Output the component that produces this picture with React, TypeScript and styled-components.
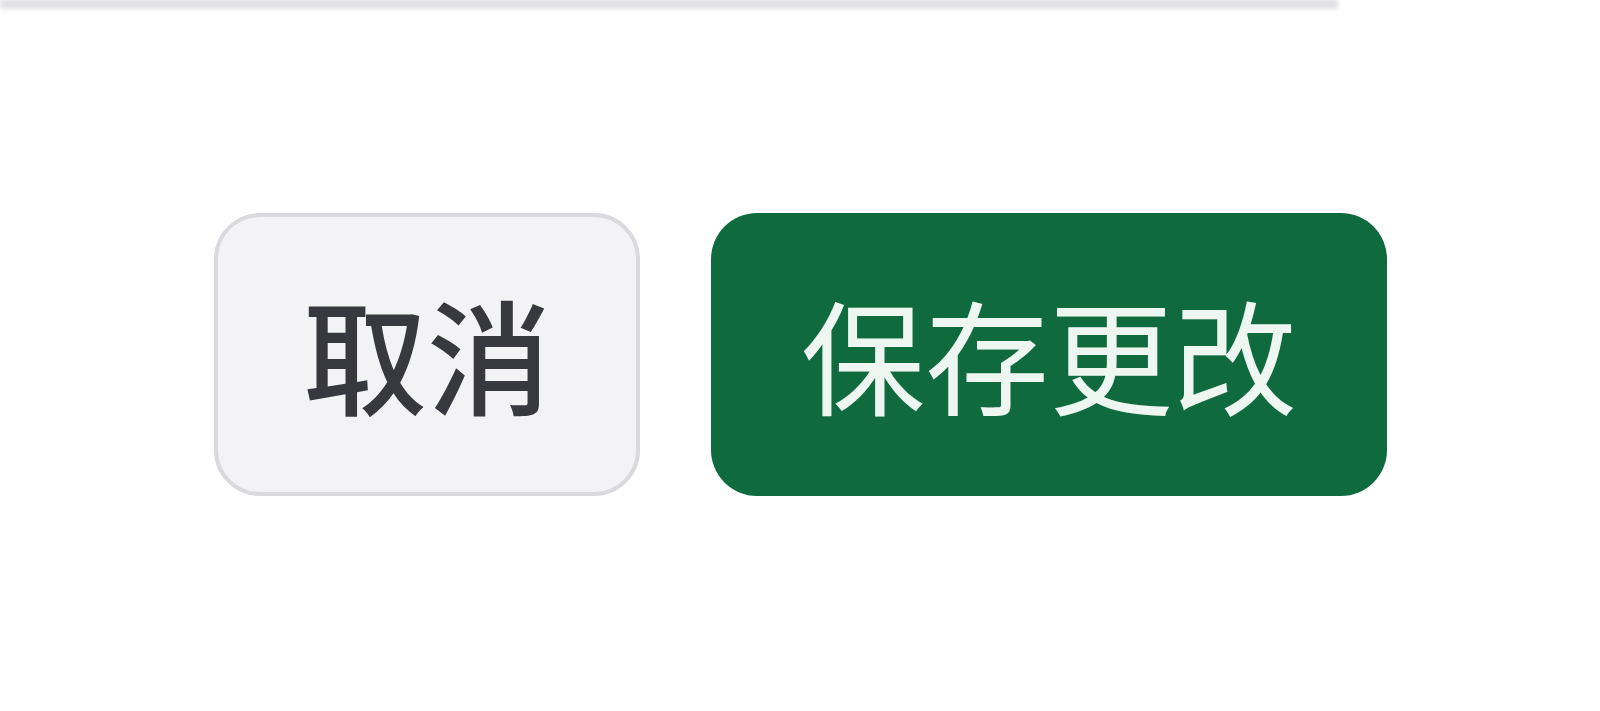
import React from "react";
import styled, { createGlobalStyle } from "styled-components";

const Global = createGlobalStyle`
  html, body {
    margin: 0;
    padding: 0;
    background: #ffffff;
  }
  body {
    font-family: "Noto Sans CJK SC", "Noto Sans", sans-serif;
  }
`;

const Page = styled.div`
  width: 1600px;
  height: 711px;
  overflow: hidden;
  background: #ffffff;
  display: flex;
  flex-direction: column;
`;

const TopEdge = styled.div`
  width: 1338px;
  height: 10px;
  background: #e0e0e3;
  filter: blur(2.5px);
  margin-top: -1px;
`;

const Actions = styled.div`
  display: flex;
  align-items: center;
  gap: 71px;
  margin-top: 204px;
  padding-left: 214px;
`;

const Button = styled.button<{ $primary?: boolean }>`
  box-sizing: border-box;
  height: 283px;
  width: ${(p) => (p.$primary ? "676px" : "426px")};
  display: flex;
  align-items: center;
  justify-content: center;
  border-radius: 46px;
  font-family: "Noto Sans CJK SC", "Noto Sans", sans-serif;
  font-size: 124px;
  line-height: 1;
  font-weight: ${(p) => (p.$primary ? 400 : 500)};
  color: ${(p) => (p.$primary ? "#eef6f1" : "#38383f")};
  background: ${(p) => (p.$primary ? "#0f6a3e" : "#f3f3f5")};
  border: ${(p) => (p.$primary ? "none" : "4px solid #d9d9de")};
  padding: 0 0 6px;
  cursor: pointer;
`;

export default function App() {
  return (
    <>
      <Global />
      <Page>
        <TopEdge />
        <Actions>
          <Button>取消</Button>
          <Button $primary>保存更改</Button>
        </Actions>
      </Page>
    </>
  );
}
